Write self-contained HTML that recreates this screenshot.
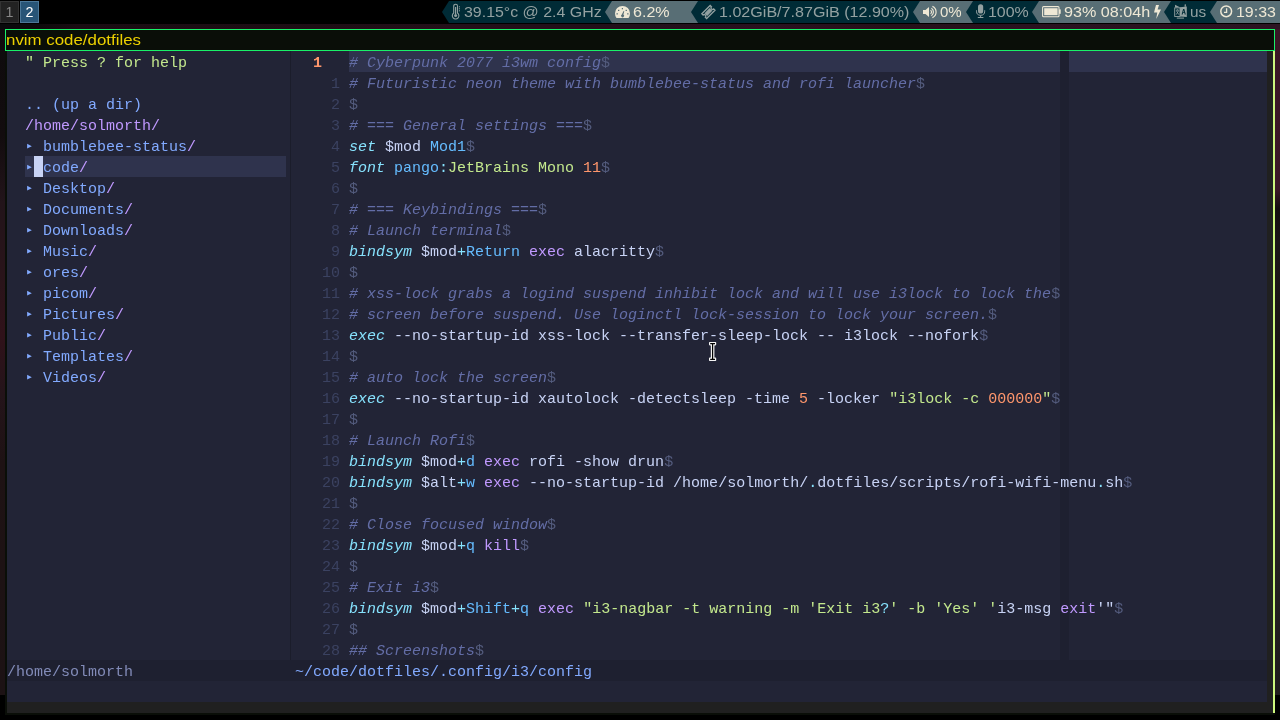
<!DOCTYPE html>
<html><head><meta charset="utf-8">
<style>
*{margin:0;padding:0;box-sizing:border-box}
html,body{width:1280px;height:720px;overflow:hidden;background:#000}
body{position:relative;font-family:"Liberation Sans",sans-serif}
.abs{position:absolute}
#wall{position:absolute;left:0;top:24px;width:1280px;height:671px;background:linear-gradient(180deg,#1a0c12 0%,#150a0e 40%,#1c0c10 70%,#120a0c 100%)}
#bar{will-change:transform;position:absolute;left:0;top:0;width:1280px;height:24px;background:#000}
.ws{position:absolute;top:1px;height:22px;border:1px solid}
.wt{position:absolute;top:4px;font-size:14.3px;line-height:normal;white-space:pre}
.bt{position:absolute;top:4px;font-size:14.3px;line-height:normal;white-space:pre;transform-origin:0 0}
#frame{position:absolute;left:5px;top:29px;width:1270px;height:686px;background:#0a0e08}
#title{position:absolute;left:5px;top:29px;width:1270px;height:22px;border:1px solid #19f068;background:#0a0e08}
#tt{will-change:transform;position:absolute;left:6.4px;top:31px;font-size:15px;line-height:normal;color:#ecd000;white-space:pre;transform:scaleX(1.124);transform-origin:0 0}
#ind{position:absolute;left:1273px;top:51px;width:2px;height:662px;background:#cdf77e}
#grey{position:absolute;left:7px;top:51px;width:1266px;height:662px;background:#202020}
#term{will-change:transform;position:absolute;left:7px;top:51px;width:1260px;height:651px;background:#222436;font-family:"Liberation Mono",monospace;font-size:15px;color:#c8d3f5}
.r{position:absolute;left:0;height:21px;line-height:21px;white-space:pre;margin-top:2px}
.c{color:#636da6;font-style:italic}
.e{color:#545c7e}
.k{color:#86e1fc;font-style:italic}
.b{color:#65bcff}
.op{color:#86e1fc}
.p{color:#c099ff}
.s{color:#c3e88d}
.o{color:#ff966c}
.bl{color:#82aaff}
.ln{color:#3b4261}
.ln0{color:#ff966c;font-weight:bold}
.tri{color:#82aaff}
.cl{position:absolute;height:21px;background:#2f334d}
.cc{position:absolute;left:1053px;top:0;width:9px;height:609px;background:#1e2030}
.vs{position:absolute;left:283px;top:0;width:1px;height:609px;background:#1b1d2b}
.cur{position:absolute;left:27px;top:105px;width:9px;height:21px;background:#c8d3f5}
.st{position:absolute;left:0;width:1260px;height:21px;background:#1e2030}
</style></head><body>
<div class="abs" style="left:0;top:24px;width:1280px;height:5px;background:linear-gradient(90deg,#0a0a0c 0%,#0e0a0c 3%,#1a0d13 6%,#1e0e15 25%,#24101a 35%,#22101a 50%,#2a1220 60%,#261019 70%,#2a1220 80%,#2c1422 100%)"></div>
<div class="abs" style="left:0;top:29px;width:5px;height:666px;background:linear-gradient(180deg,#0e0b0d 0%,#120c0e 16%,#22141a 26%,#2a141a 38%,#30121a 46%,#24141a 55%,#1e1214 65%,#1c1214 100%)"></div>
<div class="abs" style="left:1275px;top:29px;width:5px;height:666px;background:linear-gradient(180deg,#3a1626 0%,#3c1828 24%,#140e10 27%,#1c1618 32%,#1a1416 55%,#2a2224 60%,#242022 80%,#201c1e 100%)"></div>
<div id="bar">
<div class="ws" style="left:0;width:19px;background:#222;border-color:#333"></div>
<div class="ws" style="left:20px;width:19px;background:#285577;border-color:#4c7899"></div>
<div class="wt" style="left:5.6px;color:#888">1</div>
<div class="wt" style="left:25.6px;color:#fff">2</div>
<svg class="abs" style="left:0;top:0" width="1280" height="24" viewBox="0 0 1280 24">
<path d="M442 12L449 1H612V23H449Z" fill="#002b36"/>
<path d="M605 12L612 1H698V23H612Z" fill="#586e75"/>
<path d="M691 12L698 1H920V23H698Z" fill="#002b36"/>
<path d="M913 12L920 1H973V23H920Z" fill="#586e75"/>
<path d="M966 12L973 1H1039V23H973Z" fill="#002b36"/>
<path d="M1032 12L1039 1H1171V23H1039Z" fill="#586e75"/>
<path d="M1164 12L1171 1H1217V23H1171Z" fill="#002b36"/>
<path d="M1210 12L1217 1H1280V23H1217Z" fill="#586e75"/>
<g fill="none" stroke="#93a1a1" stroke-width="1.1"><path d="M453.7 13V6.1a1.9 1.9 0 0 1 3.8 0V13a3.3 3.3 0 1 1 -3.8 0Z"/></g>
<g fill="#93a1a1"><rect x="455" y="7" width="1.2" height="7"/><circle cx="455.6" cy="15.6" r="1.5"/><rect x="458.9" y="6.3" width="1.1" height="1"/><rect x="458.9" y="8.3" width="1.1" height="1"/><rect x="458.9" y="10.3" width="1.1" height="1"/></g>
<path d="M616.5 18H628.5A7.5 7.5 0 0 0 630 13.2A7.5 7.3 0 0 0 615 13.2A7.5 7.5 0 0 0 616.5 18Z" fill="#eee8d5"/>
<g fill="#586e75"><rect x="621.8" y="8" width="1.2" height="1.3"/><rect x="618" y="9.8" width="1.3" height="1.2"/><rect x="625.6" y="9.8" width="1.3" height="1.2"/><rect x="616.5" y="13.2" width="1.3" height="1.3"/><rect x="627.2" y="13.2" width="1.3" height="1.3"/><path d="M623.6 11L624.3 11.3L623.4 14.6A1.5 1.5 0 1 1 621.8 14.6Z"/></g>
<g transform="rotate(-45 708.4 12)"><path d="M702.5 8.6H714.3V10.4A1.6 1.6 0 0 0 714.3 13.6V15.4H702.5V13.6A1.6 1.6 0 0 0 702.5 10.4Z" fill="none" stroke="#93a1a1" stroke-width="1.3"/><rect x="704.8" y="10.1" width="7.2" height="3.8" fill="#93a1a1"/></g>
<path d="M923 10H925.5L929 7V17L925.5 14H923Z" fill="#eee8d5"/>
<g fill="none" stroke="#eee8d5" stroke-width="1.15"><path d="M930.5 10.3A1.9 1.9 0 0 1 930.5 13.7"/><path d="M931.4 8.3A4.4 4.4 0 0 1 931.4 15.7"/><path d="M932.4 6.4A6.1 6.1 0 0 1 932.4 17.6"/></g>
<rect x="978" y="4.2" width="5.2" height="9.4" rx="2.6" fill="#93a1a1"/>
<g fill="none" stroke="#93a1a1" stroke-width="1"><path d="M976.5 10.3V11.2A4.1 4.1 0 0 0 984.7 11.2V10.3"/><path d="M980.6 15.4V17.3M977.8 17.5H983.4"/></g>
<g><rect x="1042.6" y="6.6" width="16.4" height="10.2" rx="1" fill="none" stroke="#eee8d5" stroke-width="1.1"/><rect x="1059" y="9.4" width="1.7" height="4.4" fill="#eee8d5"/><rect x="1044.2" y="8.2" width="13.4" height="7" fill="#eee8d5"/></g>
<path d="M1156 5H1159L1157.6 9.6H1161L1156.2 19L1157.3 12.5H1154Z" fill="#eee8d5"/>
<g fill="#93a1a1"><path d="M1175 4.8L1180.4 7.4L1175 7.4Z"/><path d="M1180 7.2L1186.8 6.6V16.9L1180 16.6Z"/><path d="M1184.6 4.6L1185.9 4.2V6.8H1184.6Z"/><rect x="1176.8" y="17.6" width="7.2" height="1"/></g>
<rect x="1174.7" y="7.9" width="5.3" height="8.6" fill="none" stroke="#93a1a1" stroke-width="0.9"/>
<g fill="none" stroke="#93a1a1" stroke-width="0.8"><path d="M1176 10.2H1179M1177.5 9.3V10.2M1176.3 10.6L1178.8 14.6M1178.7 10.6L1176.2 14.6"/></g>
<path d="M1181.6 14.4L1183.1 9H1184.3L1185.8 14.4H1184.7L1184.4 13.1H1183L1182.7 14.4ZM1183.2 12.2H1184.2L1183.7 10.2Z" fill="#002b36" fill-rule="evenodd"/>
<g fill="none" stroke="#eee8d5" stroke-width="1.3"><circle cx="1226.2" cy="11.3" r="5.4" stroke-width="1.5"/><path d="M1226.6 8.3V12.3H1224"/></g>
</svg>
<div class="bt" style="left:464px;color:#93a1a1;transform:scaleX(1.114)">39.15°c @ 2.4 GHz</div>
<div class="bt" style="left:633px;color:#eee8d5;transform:scaleX(1.125)">6.2%</div>
<div class="bt" style="left:718.5px;color:#93a1a1;transform:scaleX(1.125)">1.02GiB/7.87GiB (12.90%)</div>
<div class="bt" style="left:940px;color:#eee8d5;transform:scaleX(1.05)">0%</div>
<div class="bt" style="left:988px;color:#93a1a1;transform:scaleX(1.114)">100%</div>
<div class="bt" style="left:1064px;color:#eee8d5;transform:scaleX(1.13)">93% 08:04h</div>
<div class="bt" style="left:1190px;color:#93a1a1;transform:scaleX(1.07)">us</div>
<div class="bt" style="left:1236px;color:#eee8d5;transform:scaleX(1.114)">19:33</div>
</div>
<div id="frame"></div>
<div id="title"></div>
<div id="tt">nvim code/dotfiles</div>
<div id="grey"></div>
<div id="ind"></div>
<div id="term">
<div class="cl" style="left:18px;top:105px;width:261px"></div>
<div class="cl" style="left:342px;top:0;width:918px"></div>
<div class="cc"></div>
<div class="vs"></div>
<div class="cur"></div>
<svg style="position:absolute;left:0;top:0" width="300" height="400" fill="#82aaff"><path d="M20.1 92.8L24.8 95.2L20.1 97.6Z"/><path d="M20.1 113.8L24.8 116.2L20.1 118.6Z"/><path d="M20.1 134.8L24.8 137.2L20.1 139.6Z"/><path d="M20.1 155.8L24.8 158.2L20.1 160.6Z"/><path d="M20.1 176.8L24.8 179.2L20.1 181.6Z"/><path d="M20.1 197.8L24.8 200.2L20.1 202.6Z"/><path d="M20.1 218.8L24.8 221.2L20.1 223.6Z"/><path d="M20.1 239.8L24.8 242.2L20.1 244.6Z"/><path d="M20.1 260.8L24.8 263.2L20.1 265.6Z"/><path d="M20.1 281.8L24.8 284.2L20.1 286.6Z"/><path d="M20.1 302.8L24.8 305.2L20.1 307.6Z"/><path d="M20.1 323.8L24.8 326.2L20.1 328.6Z"/></svg>
<div class="r" style="top:0px;left:18px"><span class="s">" Press ? for help</span></div>
<div class="r" style="top:21px;left:18px"></div>
<div class="r" style="top:42px;left:18px"><span class="bl">.. (up a dir)</span></div>
<div class="r" style="top:63px;left:18px"><span class="p">/home/solmorth/</span></div>
<div class="r" style="top:84px;left:18px">  <span class="bl">bumblebee-status</span><span class="p">/</span></div>
<div class="r" style="top:105px;left:18px">  <span class="bl">code</span><span class="p">/</span></div>
<div class="r" style="top:126px;left:18px">  <span class="bl">Desktop</span><span class="p">/</span></div>
<div class="r" style="top:147px;left:18px">  <span class="bl">Documents</span><span class="p">/</span></div>
<div class="r" style="top:168px;left:18px">  <span class="bl">Downloads</span><span class="p">/</span></div>
<div class="r" style="top:189px;left:18px">  <span class="bl">Music</span><span class="p">/</span></div>
<div class="r" style="top:210px;left:18px">  <span class="bl">ores</span><span class="p">/</span></div>
<div class="r" style="top:231px;left:18px">  <span class="bl">picom</span><span class="p">/</span></div>
<div class="r" style="top:252px;left:18px">  <span class="bl">Pictures</span><span class="p">/</span></div>
<div class="r" style="top:273px;left:18px">  <span class="bl">Public</span><span class="p">/</span></div>
<div class="r" style="top:294px;left:18px">  <span class="bl">Templates</span><span class="p">/</span></div>
<div class="r" style="top:315px;left:18px">  <span class="bl">Videos</span><span class="p">/</span></div>
<div class="r ln0" style="top:0;left:306px">1</div>
<div class="r" style="top:0px;left:342px"><span class="c"># Cyberpunk 2077 i3wm config</span><span class="e">$</span></div>
<div class="r ln" style="top:21px;left:288px;width:45px;text-align:right">1</div>
<div class="r" style="top:21px;left:342px"><span class="c"># Futuristic neon theme with bumblebee-status and rofi launcher</span><span class="e">$</span></div>
<div class="r ln" style="top:42px;left:288px;width:45px;text-align:right">2</div>
<div class="r" style="top:42px;left:342px"><span class="e">$</span></div>
<div class="r ln" style="top:63px;left:288px;width:45px;text-align:right">3</div>
<div class="r" style="top:63px;left:342px"><span class="c"># === General settings ===</span><span class="e">$</span></div>
<div class="r ln" style="top:84px;left:288px;width:45px;text-align:right">4</div>
<div class="r" style="top:84px;left:342px"><span class="k">set</span> $mod <span class="b">Mod1</span><span class="e">$</span></div>
<div class="r ln" style="top:105px;left:288px;width:45px;text-align:right">5</div>
<div class="r" style="top:105px;left:342px"><span class="k">font</span> <span class="b">pango</span><span class="op">:</span><span class="s">JetBrains Mono </span><span class="o">11</span><span class="e">$</span></div>
<div class="r ln" style="top:126px;left:288px;width:45px;text-align:right">6</div>
<div class="r" style="top:126px;left:342px"><span class="e">$</span></div>
<div class="r ln" style="top:147px;left:288px;width:45px;text-align:right">7</div>
<div class="r" style="top:147px;left:342px"><span class="c"># === Keybindings ===</span><span class="e">$</span></div>
<div class="r ln" style="top:168px;left:288px;width:45px;text-align:right">8</div>
<div class="r" style="top:168px;left:342px"><span class="c"># Launch terminal</span><span class="e">$</span></div>
<div class="r ln" style="top:189px;left:288px;width:45px;text-align:right">9</div>
<div class="r" style="top:189px;left:342px"><span class="k">bindsym</span> $mod<span class="op">+</span><span class="b">Return</span> <span class="p">exec</span> alacritty<span class="e">$</span></div>
<div class="r ln" style="top:210px;left:288px;width:45px;text-align:right">10</div>
<div class="r" style="top:210px;left:342px"><span class="e">$</span></div>
<div class="r ln" style="top:231px;left:288px;width:45px;text-align:right">11</div>
<div class="r" style="top:231px;left:342px"><span class="c"># xss-lock grabs a logind suspend inhibit lock and will use i3lock to lock the</span><span class="e">$</span></div>
<div class="r ln" style="top:252px;left:288px;width:45px;text-align:right">12</div>
<div class="r" style="top:252px;left:342px"><span class="c"># screen before suspend. Use loginctl lock-session to lock your screen.</span><span class="e">$</span></div>
<div class="r ln" style="top:273px;left:288px;width:45px;text-align:right">13</div>
<div class="r" style="top:273px;left:342px"><span class="k">exec</span> --no-startup-id xss-lock --transfer-sleep-lock -- i3lock --nofork<span class="e">$</span></div>
<div class="r ln" style="top:294px;left:288px;width:45px;text-align:right">14</div>
<div class="r" style="top:294px;left:342px"><span class="e">$</span></div>
<div class="r ln" style="top:315px;left:288px;width:45px;text-align:right">15</div>
<div class="r" style="top:315px;left:342px"><span class="c"># auto lock the screen</span><span class="e">$</span></div>
<div class="r ln" style="top:336px;left:288px;width:45px;text-align:right">16</div>
<div class="r" style="top:336px;left:342px"><span class="k">exec</span> --no-startup-id xautolock -detectsleep -time <span class="o">5</span> -locker <span class="s">"i3lock -c </span><span class="o">000000</span><span class="s">"</span><span class="e">$</span></div>
<div class="r ln" style="top:357px;left:288px;width:45px;text-align:right">17</div>
<div class="r" style="top:357px;left:342px"><span class="e">$</span></div>
<div class="r ln" style="top:378px;left:288px;width:45px;text-align:right">18</div>
<div class="r" style="top:378px;left:342px"><span class="c"># Launch Rofi</span><span class="e">$</span></div>
<div class="r ln" style="top:399px;left:288px;width:45px;text-align:right">19</div>
<div class="r" style="top:399px;left:342px"><span class="k">bindsym</span> $mod<span class="op">+</span><span class="b">d</span> <span class="p">exec</span> rofi -show drun<span class="e">$</span></div>
<div class="r ln" style="top:420px;left:288px;width:45px;text-align:right">20</div>
<div class="r" style="top:420px;left:342px"><span class="k">bindsym</span> $alt<span class="op">+</span><span class="b">w</span> <span class="p">exec</span> --no-startup-id /home/solmorth/<span class="op">.</span>dotfiles/scripts/rofi-wifi-menu<span class="op">.</span>sh<span class="e">$</span></div>
<div class="r ln" style="top:441px;left:288px;width:45px;text-align:right">21</div>
<div class="r" style="top:441px;left:342px"><span class="e">$</span></div>
<div class="r ln" style="top:462px;left:288px;width:45px;text-align:right">22</div>
<div class="r" style="top:462px;left:342px"><span class="c"># Close focused window</span><span class="e">$</span></div>
<div class="r ln" style="top:483px;left:288px;width:45px;text-align:right">23</div>
<div class="r" style="top:483px;left:342px"><span class="k">bindsym</span> $mod<span class="op">+</span><span class="b">q</span> <span class="p">kill</span><span class="e">$</span></div>
<div class="r ln" style="top:504px;left:288px;width:45px;text-align:right">24</div>
<div class="r" style="top:504px;left:342px"><span class="e">$</span></div>
<div class="r ln" style="top:525px;left:288px;width:45px;text-align:right">25</div>
<div class="r" style="top:525px;left:342px"><span class="c"># Exit i3</span><span class="e">$</span></div>
<div class="r ln" style="top:546px;left:288px;width:45px;text-align:right">26</div>
<div class="r" style="top:546px;left:342px"><span class="k">bindsym</span> $mod<span class="op">+</span><span class="b">Shift</span><span class="op">+</span><span class="b">q</span> <span class="p">exec</span> <span class="s">"i3-nagbar -t warning -m 'Exit i3</span><span class="op">?</span><span class="s">' -b 'Yes' '</span>i3-msg <span class="p">exit</span>'"<span class="e">$</span></div>
<div class="r ln" style="top:567px;left:288px;width:45px;text-align:right">27</div>
<div class="r" style="top:567px;left:342px"><span class="e">$</span></div>
<div class="r ln" style="top:588px;left:288px;width:45px;text-align:right">28</div>
<div class="r" style="top:588px;left:342px"><span class="c">## Screenshots</span><span class="e">$</span></div>
<div class="st" style="top:609px"></div>
<div class="r" style="top:609px;left:0;color:#828bb8">/home/solmorth</div>
<div class="r" style="top:609px;left:288px;color:#82aaff">~/code/dotfiles/.config/i3/config</div>
</div>
<svg class="abs" style="left:708px;top:341px" width="10" height="22" viewBox="708 341 10 22"><path d="M709.6 342H715.6Q716.2 342 716.2 342.8V344.6Q716.2 345.4 715.4 345.4H714.4V357.6H715.4Q716.2 357.6 716.2 358.4V360.2Q716.2 361 715.6 361H709.6Q709 361 709 360.2V358.4Q709 357.6 709.8 357.6H710.8V345.4H709.8Q709 345.4 709 344.6V342.8Q709 342 709.6 342Z" fill="#f4f4f4"/><path d="M710.2 343.1H715V344.3H713.2V358.7H715V359.9H710.2V358.7H712V344.3H710.2Z" fill="#000"/></svg>
</body></html>
